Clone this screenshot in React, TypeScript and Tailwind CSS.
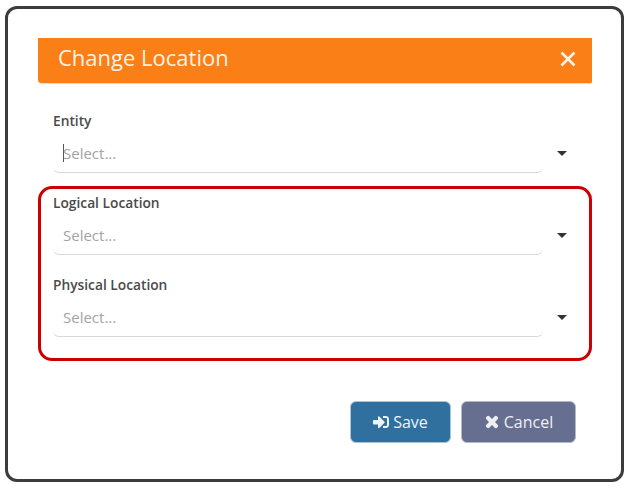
import { FaSignInAlt, FaTimes } from "react-icons/fa";

function Field({ label, focused }: { label: string; focused?: boolean }) {
  return (
    <div className="h-[82px] pt-[3px]">
      <label className="block h-[24px] pl-[15px] text-[13.75px] leading-[24px] font-semibold text-[#4a4a4a]">{label}</label>
      <div className="flex items-start">
        <div className="ml-[15px] flex h-[40px] w-[490px] items-center rounded-b-[6px] border-b border-[#d8d8d8] pl-[10px] pt-[1px] text-[15px] text-[#a3a3a3]">
          {focused && <span className="mr-[-1px] h-[18px] w-[1px] bg-[#555]" />}
          <span>Select...</span>
        </div>
        <div className="ml-[14px] mt-[18px] h-0 w-0 border-x-[5px] border-t-[5px] border-x-transparent border-t-[#333]" />
      </div>
    </div>
  );
}

export default function App() {
  return (
    <div className="h-[488px] w-[630px] bg-white pl-[5px] pt-[6px] font-['Open_Sans',sans-serif]">
      <div className="h-[476px] w-[619px] rounded-[12px] border-[3px] border-[#3c3c3c] bg-white pl-[30px] pr-[27px] pt-[29px]">
        <div className="flex h-[46px] w-[554px] items-center justify-between rounded-bl-[4px] rounded-br-[2px] border-b border-[#f8d9b8] bg-[#f97f16] pl-[20px] pr-[14px]">
          <h1 className="pb-[6px] text-[22px] font-normal text-[#fdf3e6]">Change Location</h1>
          <svg width="20" height="20" viewBox="0 0 20 20" className="mb-[4px]">
            <path d="M3.5 3.5 16.5 16.5M16.5 3.5 3.5 16.5" stroke="#fdf3e6" strokeWidth="2.6" />
          </svg>
        </div>
        <div className="mt-[22px] w-[554px]">
          <Field label="Entity" focused />
          <div className="mt-[-2px] h-[175px] rounded-[14px] border-[3px] border-[#cc0000]">
            <div className="mt-[-1px] ml-[-3px]">
              <Field label="Logical Location" />
              <Field label="Physical Location" />
            </div>
          </div>
        </div>
        <div className="mt-[40px] flex w-[538px] justify-end gap-[10px]">
          <button className="flex h-[42px] w-[101px] items-center justify-center gap-[4px] rounded-[6px] border border-[#a9c6dc] bg-[#2f709f] text-[16px] text-[#eef3f7]">
            <FaSignInAlt className="text-[16px]" />
            Save
          </button>
          <button className="flex h-[42px] w-[115px] items-center justify-center gap-[4px] rounded-[6px] border border-[#b4b9cb] bg-[#666f8f] text-[16px] text-[#eef0f4]">
            <FaTimes className="stroke-current stroke-[40] text-[16px]" />
            Cancel
          </button>
        </div>
      </div>
    </div>
  );
}
